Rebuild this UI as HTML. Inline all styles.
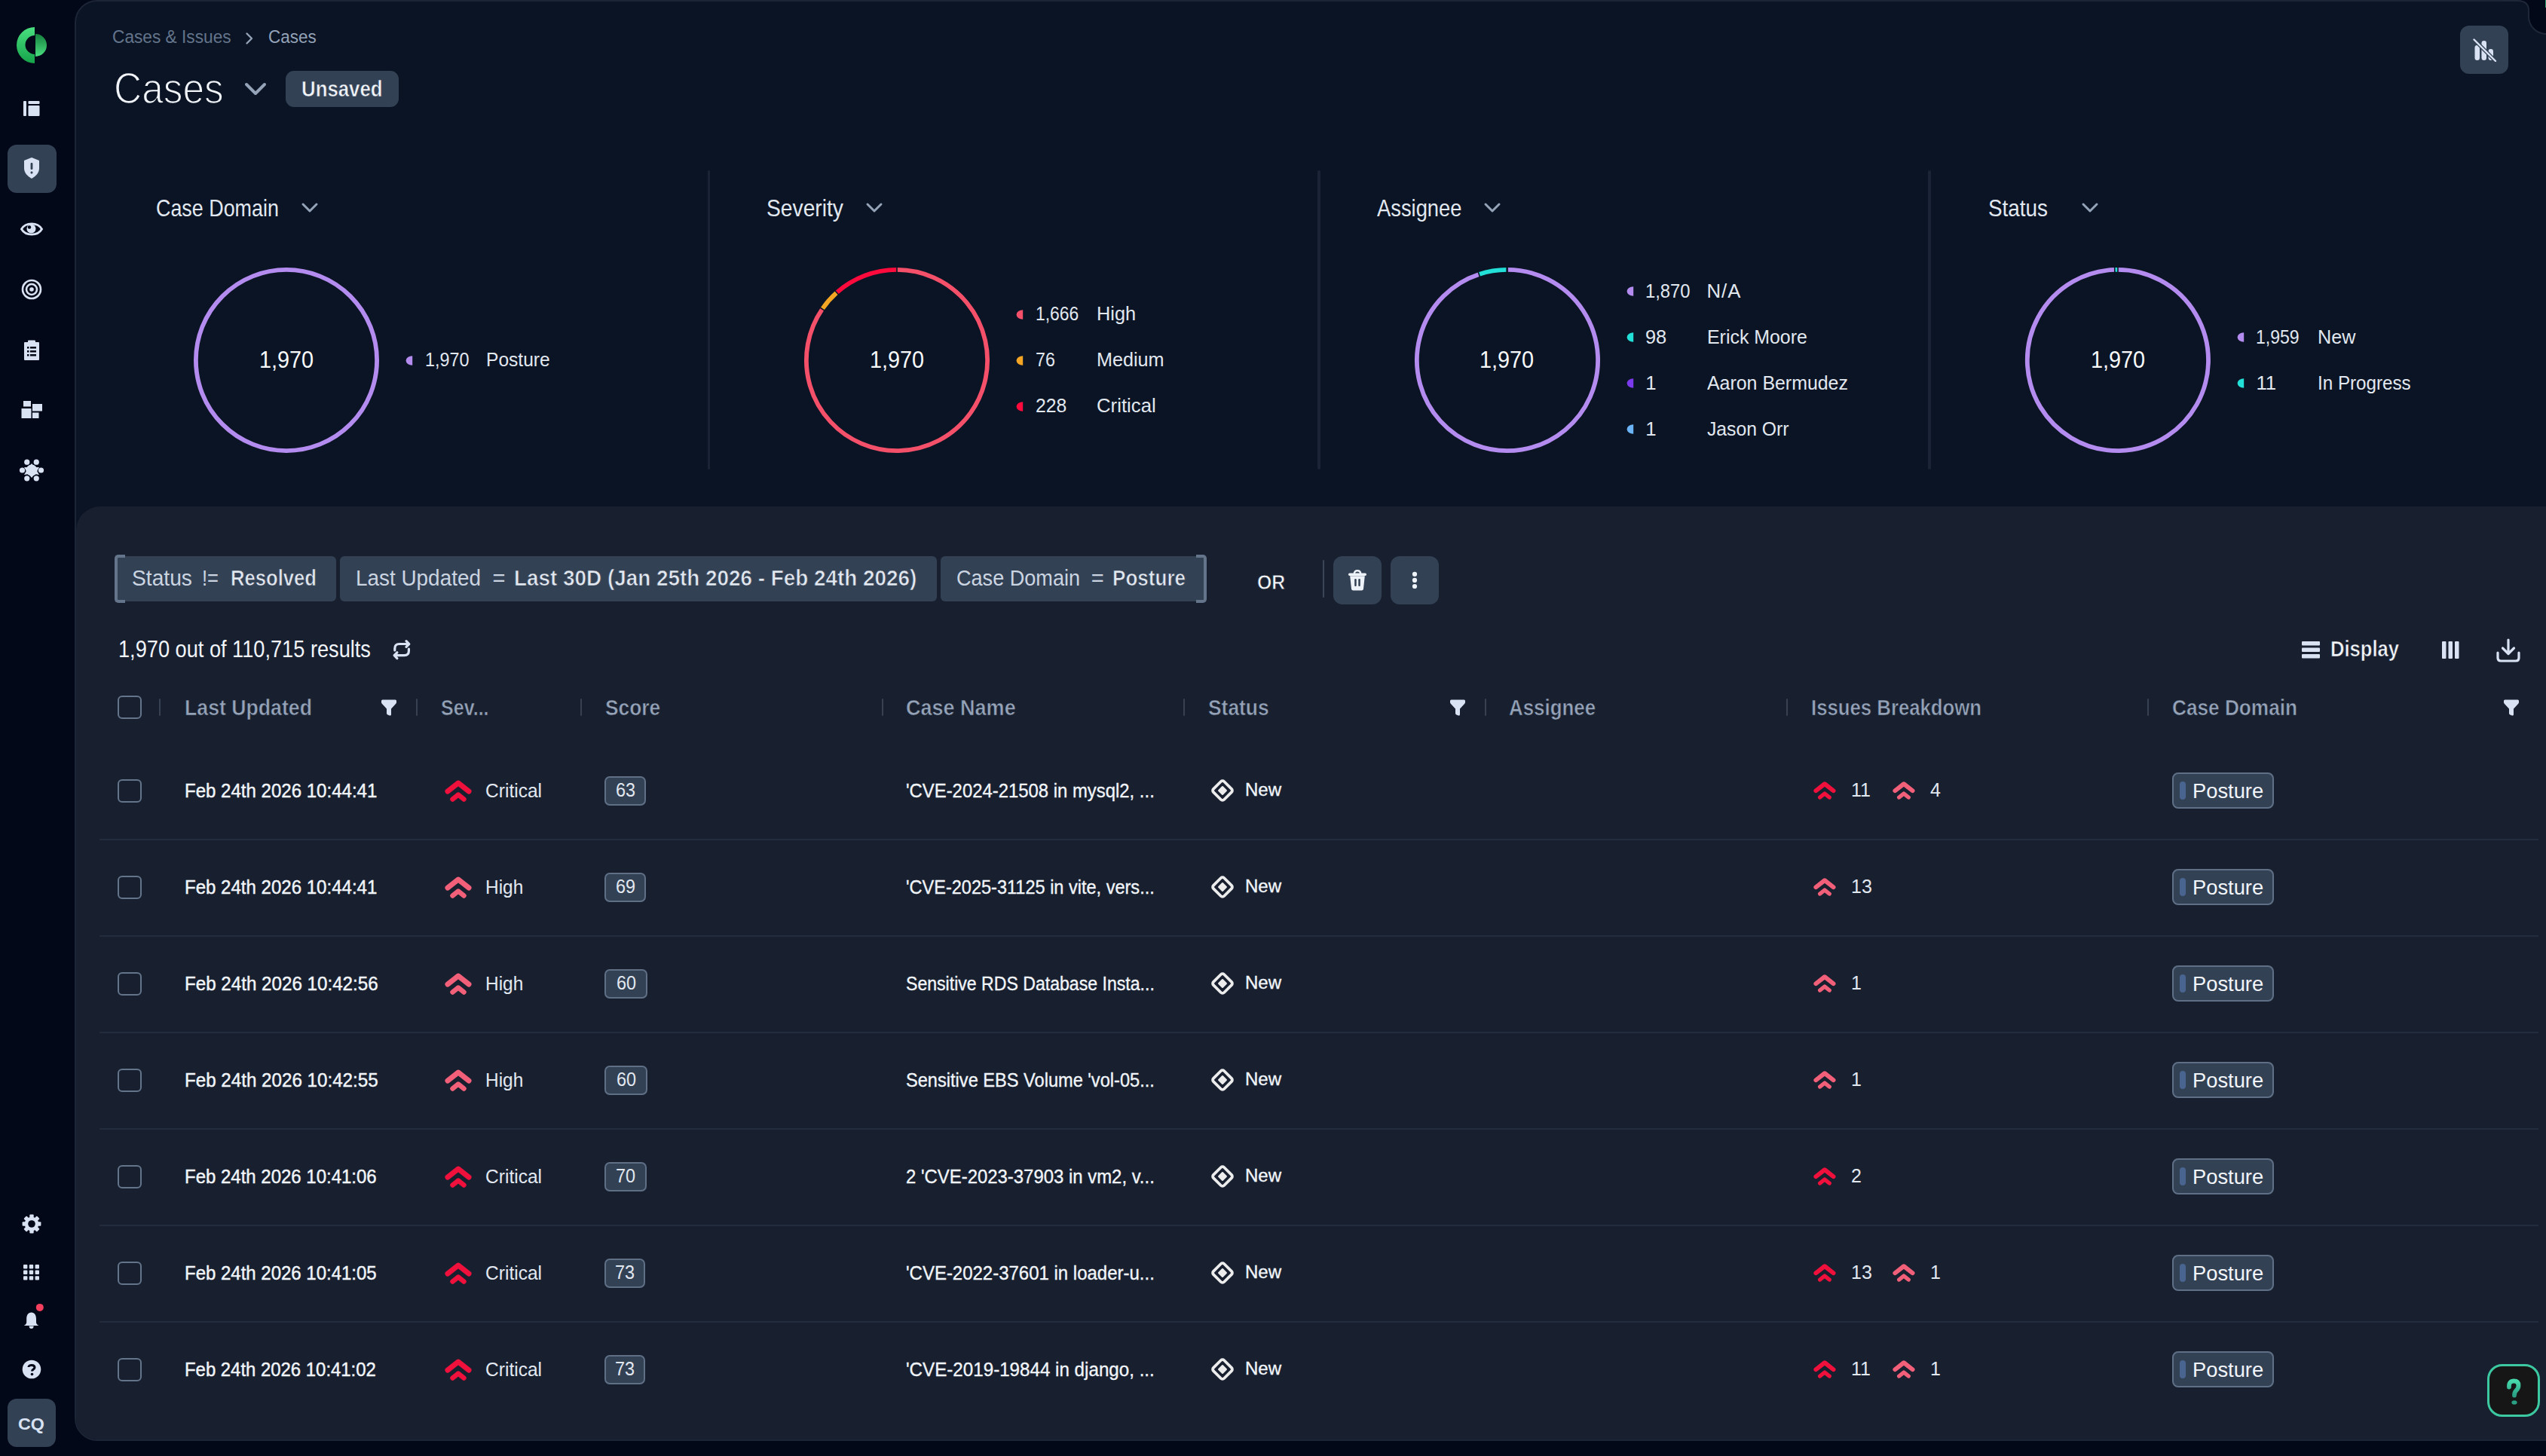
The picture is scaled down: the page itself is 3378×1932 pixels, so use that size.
<!DOCTYPE html><html><head><meta charset="utf-8"><style>
html,body{margin:0;padding:0;width:3378px;height:1932px;overflow:hidden;background:#020817;}
body{position:relative;font-family:"Liberation Sans",sans-serif;}
.t{position:absolute;white-space:pre;line-height:1;}
.r{position:absolute;box-sizing:border-box;}
</style></head><body>
<div class="r" style="left:99px;top:0px;width:3319px;height:1912px;background:#0b1424;border-radius:30px;border:2px solid #1c2536;"></div>
<div class="r" style="left:101px;top:672px;width:3317px;height:1238px;background:#182030;border-radius:32px 0 0 28px;"></div>
<svg class="r" style="left:3320px;top:0px;" width="58" height="60" viewBox="0 0 58 60"><path d="M20 0 Q35 0 35 14 L35 22 A23 23 0 0 0 58 45 L58 0 Z" fill="#020817"/><path d="M0 1 L20 1 Q35 1 35 14 L35 22 A23 23 0 0 0 58 45" fill="none" stroke="#1e2738" stroke-width="2"/></svg>
<div class="r" style="left:3377px;top:0px;width:1px;height:10px;background:#2f9e6e;border-radius:0px;"></div>
<svg class="r" style="left:20px;top:34px;" width="44" height="52" viewBox="0 0 44 52"><defs><linearGradient id="lg1" x1="0" y1="0" x2="0" y2="1"><stop offset="0" stop-color="#4ade80"/><stop offset="1" stop-color="#16a34a"/></linearGradient>
<linearGradient id="lg2" x1="0" y1="0" x2="0" y2="1"><stop offset="0" stop-color="#15803d"/><stop offset="1" stop-color="#4ade80"/></linearGradient></defs>
<path d="M26 2 A24 24 0 0 0 26 50 L26 38 A12 12 0 0 1 26 13 Z" fill="url(#lg1)"/>
<path d="M27 11 A15 15 0 0 1 27 41 Z" fill="url(#lg2)"/></svg>
<svg class="r" style="left:30px;top:133px;" width="24" height="22" viewBox="0 0 24 22"><rect x="1" y="1" width="4" height="20" rx="1" fill="#d8e2f3"/><rect x="7.5" y="1" width="15" height="4" rx="1" fill="#d8e2f3"/><rect x="7.5" y="7" width="15" height="14" rx="1" fill="#d8e2f3"/></svg>
<div class="r" style="left:10px;top:192px;width:65px;height:64px;background:#334155;border-radius:12px;"></div>
<svg class="r" style="left:30px;top:208px;" width="24" height="30" viewBox="0 0 24 30"><path d="M12 1 L22 5 L22 15 C22 22 17 26 12 29 C7 26 2 22 2 15 L2 5 Z" fill="#d8e2f3"/><rect x="10.6" y="8" width="2.8" height="9" rx="1" fill="#334155"/><rect x="10.6" y="19.5" width="2.8" height="3" rx="1" fill="#334155"/></svg>
<svg class="r" style="left:26px;top:293px;" width="32" height="22" viewBox="0 0 32 22"><path d="M2.5 11 C8 1.5 24 1.5 29.5 11 C24 20.5 8 20.5 2.5 11 Z" fill="none" stroke="#d8e2f3" stroke-width="2.8"/><circle cx="15.5" cy="10.5" r="6" fill="#d8e2f3"/><circle cx="13" cy="8.5" r="2.2" fill="#020817"/></svg>
<svg class="r" style="left:28px;top:370px;" width="28" height="28" viewBox="0 0 28 28"><circle cx="14" cy="14" r="12" fill="none" stroke="#d8e2f3" stroke-width="2.6"/><circle cx="14" cy="14" r="7" fill="none" stroke="#d8e2f3" stroke-width="2.6"/><circle cx="14" cy="14" r="2.8" fill="#d8e2f3"/></svg>
<svg class="r" style="left:31px;top:450.5px;" width="22" height="28" viewBox="0 0 22 28"><rect x="1" y="3" width="20" height="24" rx="1" fill="#d8e2f3"/><rect x="6" y="0.5" width="10" height="4" rx="1" fill="#d8e2f3"/><rect x="5" y="9" width="2.5" height="2.5" fill="#020817"/><rect x="9" y="9" width="8" height="2.5" fill="#020817"/><rect x="5" y="14" width="2.5" height="2.5" fill="#020817"/><rect x="9" y="14" width="8" height="2.5" fill="#020817"/><rect x="5" y="19" width="2.5" height="2.5" fill="#020817"/><rect x="9" y="19" width="8" height="2.5" fill="#020817"/></svg>
<svg class="r" style="left:27px;top:532px;" width="30" height="24" viewBox="0 0 30 24"><rect x="4" y="0" width="10" height="7.5" fill="#d8e2f3"/><rect x="16" y="4" width="13" height="9.5" fill="#d8e2f3"/><rect x="1.5" y="10" width="13" height="13" fill="#d8e2f3"/><rect x="16" y="15.5" width="8.5" height="7.5" fill="#d8e2f3"/></svg>
<svg class="r" style="left:25px;top:607px;" width="34" height="34" viewBox="0 0 34 34"><circle cx="17" cy="17" r="7.5" fill="#d8e2f3"/><path d="M17 8 L21 13 L27 13 L24 18 L27 23 L21 22 L17 27 L13 22 L7 23 L10 18 L7 13 L13 13 Z" fill="#d8e2f3"/><circle cx="29.50" cy="17.00" r="3.6" fill="#d8e2f3"/><circle cx="23.25" cy="27.83" r="3.6" fill="#d8e2f3"/><circle cx="10.75" cy="27.83" r="3.6" fill="#d8e2f3"/><circle cx="4.50" cy="17.00" r="3.6" fill="#d8e2f3"/><circle cx="10.75" cy="6.17" r="3.6" fill="#d8e2f3"/><circle cx="23.25" cy="6.17" r="3.6" fill="#d8e2f3"/></svg>
<svg class="r" style="left:29px;top:1611px;" width="26" height="26" viewBox="0 0 26 26"><rect x="10.3" y="0.6" width="5.4" height="6" rx="1" fill="#d8e2f3" transform="rotate(0 13 13)"/><rect x="10.3" y="0.6" width="5.4" height="6" rx="1" fill="#d8e2f3" transform="rotate(45 13 13)"/><rect x="10.3" y="0.6" width="5.4" height="6" rx="1" fill="#d8e2f3" transform="rotate(90 13 13)"/><rect x="10.3" y="0.6" width="5.4" height="6" rx="1" fill="#d8e2f3" transform="rotate(135 13 13)"/><rect x="10.3" y="0.6" width="5.4" height="6" rx="1" fill="#d8e2f3" transform="rotate(180 13 13)"/><rect x="10.3" y="0.6" width="5.4" height="6" rx="1" fill="#d8e2f3" transform="rotate(225 13 13)"/><rect x="10.3" y="0.6" width="5.4" height="6" rx="1" fill="#d8e2f3" transform="rotate(270 13 13)"/><rect x="10.3" y="0.6" width="5.4" height="6" rx="1" fill="#d8e2f3" transform="rotate(315 13 13)"/><circle cx="13" cy="13" r="9.3" fill="#d8e2f3"/><circle cx="13" cy="13" r="4.8" fill="#020817"/></svg>
<svg class="r" style="left:31px;top:1678px;" width="22" height="21" viewBox="0 0 22 21"><rect x="0.0" y="0.0" width="5.4" height="5.4" rx="1" fill="#d8e2f3"/><rect x="7.8" y="0.0" width="5.4" height="5.4" rx="1" fill="#d8e2f3"/><rect x="15.6" y="0.0" width="5.4" height="5.4" rx="1" fill="#d8e2f3"/><rect x="0.0" y="7.6" width="5.4" height="5.4" rx="1" fill="#d8e2f3"/><rect x="7.8" y="7.6" width="5.4" height="5.4" rx="1" fill="#d8e2f3"/><rect x="15.6" y="7.6" width="5.4" height="5.4" rx="1" fill="#d8e2f3"/><rect x="0.0" y="15.2" width="5.4" height="5.4" rx="1" fill="#d8e2f3"/><rect x="7.8" y="15.2" width="5.4" height="5.4" rx="1" fill="#d8e2f3"/><rect x="15.6" y="15.2" width="5.4" height="5.4" rx="1" fill="#d8e2f3"/></svg>
<svg class="r" style="left:30px;top:1728px;" width="32" height="38" viewBox="0 0 32 38"><path d="M11.6 13.5 C7.2 13.5 5.2 17.5 5.2 22 L5.2 26.5 Q5.2 29.3 1.8 31 L21.4 31 Q18 29.3 18 26.5 L18 22 C18 17.5 16 13.5 11.6 13.5 Z" fill="#d8e2f3"/><path d="M8.6 31.5 A3 3.5 0 0 0 14.6 31.5 Z" fill="#d8e2f3"/><circle cx="22.8" cy="6.9" r="5" fill="#f43f5e"/></svg>
<svg class="r" style="left:29px;top:1804px;" width="26" height="26" viewBox="0 0 26 26"><circle cx="13" cy="13" r="12.3" fill="#d8e2f3"/><path d="M9 10 C9 6.5 17 6.5 17 10.5 C17 13 13.5 13 13.5 15.5" fill="none" stroke="#020817" stroke-width="3"/><circle cx="13.5" cy="19.5" r="1.8" fill="#020817"/></svg>
<div class="r" style="left:10px;top:1856px;width:64px;height:64px;background:#334155;border-radius:12px;"></div>
<div class="t" style="left:24.20px;top:1878.54px;font-size:21.80px;letter-spacing:0.000px;color:#d8e2f3;font-weight:bold;transform:scaleX(1.0671);transform-origin:0 0;">CQ</div>
<div class="t" style="left:148.60px;top:37.28px;font-size:24.71px;letter-spacing:0.000px;color:#64748b;transform:scaleX(0.9184);transform-origin:0 0;">Cases &amp; Issues</div>
<svg class="r" style="left:324px;top:42px;" width="14" height="18" viewBox="0 0 14 18"><path d="M3.5 2.5 L10 9 L3.5 15.5" fill="none" stroke="#94a3b8" stroke-width="2.4" stroke-linecap="round" stroke-linejoin="round"/></svg>
<div class="t" style="left:355.60px;top:37.28px;font-size:24.71px;letter-spacing:0.000px;color:#94a3b8;transform:scaleX(0.9093);transform-origin:0 0;">Cases</div>
<div class="t" style="left:150.70px;top:88.27px;font-size:58.14px;letter-spacing:0.000px;color:#f1f5f9;transform:scaleX(0.8852);transform-origin:0 0;-webkit-text-stroke:1.6px #0b1424;">Cases</div>
<svg class="r" style="left:322px;top:106px;" width="34" height="24" viewBox="0 0 34 24"><path d="M5 6 L17 18 L29 6" fill="none" stroke="#94a3b8" stroke-width="4" stroke-linecap="round" stroke-linejoin="round"/></svg>
<div class="r" style="left:379px;top:94px;width:150px;height:48px;background:#334155;border-radius:11px;"></div>
<div class="t" style="left:400.00px;top:103.99px;font-size:29.07px;letter-spacing:0.000px;color:#f1f5f9;font-weight:bold;transform:scaleX(0.8876);transform-origin:0 0;-webkit-text-stroke:0.6px #334155;">Unsaved</div>
<div class="r" style="left:3264px;top:34px;width:64px;height:64px;background:#334155;border-radius:12px;"></div>
<svg class="r" style="left:3280px;top:50px;" width="34" height="32" viewBox="0 0 34 32"><rect x="3.5" y="10" width="6.5" height="20" rx="3.25" fill="#d8e2f3"/><rect x="12.5" y="4" width="6.5" height="26" rx="3.25" fill="#d8e2f3"/><rect x="21.5" y="15" width="6.5" height="15" rx="3.25" fill="#d8e2f3"/><path d="M2.5 2.5 L31 31" stroke="#334155" stroke-width="5"/><path d="M2.5 2.5 L31 31" stroke="#d8e2f3" stroke-width="2.4" stroke-linecap="round"/></svg>
<div class="t" style="left:207.00px;top:260.96px;font-size:30.52px;letter-spacing:0.000px;color:#e2e8f0;transform:scaleX(0.8812);transform-origin:0 0;">Case Domain</div>
<svg class="r" style="left:398px;top:264px;" width="26" height="24" viewBox="0 0 26 24"><path d="M4 7 L13 16 L22 7" fill="none" stroke="#94a3b8" stroke-width="3" stroke-linecap="round" stroke-linejoin="round"/></svg>
<svg class="r" style="left:250px;top:348px;" width="260" height="260" viewBox="0 0 260 260"><circle cx="130" cy="130" r="120.1" fill="none" stroke="#b48cf0" stroke-width="5.8"/></svg>
<div class="t" style="left:343.90px;top:462.16px;font-size:30.52px;letter-spacing:0.000px;color:#f8fafc;transform:scaleX(0.9443);transform-origin:0 0;">1,970</div>
<svg class="r" style="left:538px;top:471.5px;" width="10" height="13" viewBox="0 0 10 13"><path d="M9.2 0.3 A8.6 6.2 0 0 0 9.2 12.7 Z" fill="#b48cf0"/></svg>
<div class="t" style="left:563.80px;top:465.02px;font-size:25.73px;letter-spacing:0.000px;color:#e2e8f0;transform:scaleX(0.9093);transform-origin:0 0;">1,970</div>
<div class="t" style="left:645.00px;top:465.02px;font-size:25.73px;letter-spacing:0.000px;color:#e2e8f0;transform:scaleX(0.9557);transform-origin:0 0;">Posture</div>
<div class="r" style="left:938.5px;top:226px;width:3.5px;height:397px;background:#1a2436;border-radius:2px;"></div>
<div class="t" style="left:1016.60px;top:260.96px;font-size:30.52px;letter-spacing:0.000px;color:#e2e8f0;transform:scaleX(0.9248);transform-origin:0 0;">Severity</div>
<svg class="r" style="left:1146.6px;top:264px;" width="26" height="24" viewBox="0 0 26 24"><path d="M4 7 L13 16 L22 7" fill="none" stroke="#94a3b8" stroke-width="3" stroke-linecap="round" stroke-linejoin="round"/></svg>
<svg class="r" style="left:1060px;top:348px;" width="260" height="260" viewBox="0 0 260 260"><path d="M130.00 9.90 A120.1 120.1 0 1 1 30.96 62.07" fill="none" stroke="#f5506a" stroke-width="5.8"/><path d="M30.96 62.07 A120.1 120.1 0 0 1 50.16 40.28" fill="none" stroke="#f5a524" stroke-width="5.8"/><path d="M50.16 40.28 A120.1 120.1 0 0 1 130.00 9.90" fill="none" stroke="#ff0a3c" stroke-width="5.8"/><path d="M35.08 64.89 L26.84 59.24" stroke="#0b1424" stroke-width="1.6"/><path d="M53.48 44.02 L46.84 36.54" stroke="#0b1424" stroke-width="1.6"/><path d="M130.00 14.90 L130.00 4.90" stroke="#0b1424" stroke-width="1.6"/></svg>
<div class="t" style="left:1153.90px;top:462.16px;font-size:30.52px;letter-spacing:0.000px;color:#f8fafc;transform:scaleX(0.9443);transform-origin:0 0;">1,970</div>
<svg class="r" style="left:1348px;top:410.5px;" width="10" height="13" viewBox="0 0 10 13"><path d="M9.2 0.3 A8.6 6.2 0 0 0 9.2 12.7 Z" fill="#f5506a"/></svg>
<div class="t" style="left:1373.80px;top:404.02px;font-size:25.73px;letter-spacing:0.000px;color:#e2e8f0;transform:scaleX(0.8891);transform-origin:0 0;">1,666</div>
<div class="t" style="left:1455.00px;top:404.02px;font-size:25.73px;letter-spacing:0.000px;color:#e2e8f0;transform:scaleX(0.9836);transform-origin:0 0;">High</div>
<svg class="r" style="left:1348px;top:471.5px;" width="10" height="13" viewBox="0 0 10 13"><path d="M9.2 0.3 A8.6 6.2 0 0 0 9.2 12.7 Z" fill="#f5a524"/></svg>
<div class="t" style="left:1373.80px;top:465.02px;font-size:25.73px;letter-spacing:0.000px;color:#e2e8f0;transform:scaleX(0.9035);transform-origin:0 0;">76</div>
<div class="t" style="left:1455.00px;top:465.02px;font-size:25.73px;letter-spacing:0.000px;color:#e2e8f0;transform:scaleX(0.9786);transform-origin:0 0;">Medium</div>
<svg class="r" style="left:1348px;top:532.5px;" width="10" height="13" viewBox="0 0 10 13"><path d="M9.2 0.3 A8.6 6.2 0 0 0 9.2 12.7 Z" fill="#ff0a3c"/></svg>
<div class="t" style="left:1373.80px;top:526.02px;font-size:25.73px;letter-spacing:0.000px;color:#e2e8f0;transform:scaleX(0.9613);transform-origin:0 0;">228</div>
<div class="t" style="left:1455.00px;top:526.02px;font-size:25.73px;letter-spacing:0.015px;color:#e2e8f0;">Critical</div>
<div class="r" style="left:1748.0px;top:226px;width:3.5px;height:397px;background:#1a2436;border-radius:2px;"></div>
<div class="t" style="left:1826.70px;top:260.96px;font-size:30.52px;letter-spacing:0.000px;color:#e2e8f0;transform:scaleX(0.8957);transform-origin:0 0;">Assignee</div>
<svg class="r" style="left:1967px;top:264px;" width="26" height="24" viewBox="0 0 26 24"><path d="M4 7 L13 16 L22 7" fill="none" stroke="#94a3b8" stroke-width="3" stroke-linecap="round" stroke-linejoin="round"/></svg>
<svg class="r" style="left:1869.5px;top:348px;" width="260" height="260" viewBox="0 0 260 260"><path d="M130.00 9.90 A120.1 120.1 0 1 1 92.34 15.96" fill="none" stroke="#b48cf0" stroke-width="5.8"/><path d="M92.34 15.96 A120.1 120.1 0 0 1 129.23 9.90" fill="none" stroke="#22e0d8" stroke-width="5.8"/><path d="M129.23 9.90 A120.1 120.1 0 0 1 129.62 9.90" fill="none" stroke="#7c3aed" stroke-width="5.8"/><path d="M129.62 9.90 A120.1 120.1 0 0 1 130.00 9.90" fill="none" stroke="#60a5fa" stroke-width="5.8"/><path d="M93.91 20.70 L90.77 11.21" stroke="#0b1424" stroke-width="1.6"/><path d="M129.27 14.90 L129.20 4.90" stroke="#0b1424" stroke-width="1.6"/><path d="M129.63 14.90 L129.60 4.90" stroke="#0b1424" stroke-width="1.6"/><path d="M130.00 14.90 L130.00 4.90" stroke="#0b1424" stroke-width="1.6"/></svg>
<div class="t" style="left:1963.40px;top:462.16px;font-size:30.52px;letter-spacing:0.000px;color:#f8fafc;transform:scaleX(0.9443);transform-origin:0 0;">1,970</div>
<svg class="r" style="left:2157.5px;top:380.0px;" width="10" height="13" viewBox="0 0 10 13"><path d="M9.2 0.3 A8.6 6.2 0 0 0 9.2 12.7 Z" fill="#b48cf0"/></svg>
<div class="t" style="left:2183.30px;top:373.52px;font-size:25.73px;letter-spacing:0.000px;color:#e2e8f0;transform:scaleX(0.9248);transform-origin:0 0;">1,870</div>
<div class="t" style="left:2264.50px;top:373.52px;font-size:25.73px;letter-spacing:0.968px;color:#e2e8f0;">N/A</div>
<svg class="r" style="left:2157.5px;top:441.0px;" width="10" height="13" viewBox="0 0 10 13"><path d="M9.2 0.3 A8.6 6.2 0 0 0 9.2 12.7 Z" fill="#22e0d8"/></svg>
<div class="t" style="left:2183.30px;top:434.52px;font-size:25.73px;letter-spacing:0.000px;color:#e2e8f0;transform:scaleX(0.9875);transform-origin:0 0;">98</div>
<div class="t" style="left:2264.50px;top:434.52px;font-size:25.73px;letter-spacing:0.000px;color:#e2e8f0;transform:scaleX(0.9683);transform-origin:0 0;">Erick Moore</div>
<svg class="r" style="left:2157.5px;top:502.0px;" width="10" height="13" viewBox="0 0 10 13"><path d="M9.2 0.3 A8.6 6.2 0 0 0 9.2 12.7 Z" fill="#7c3aed"/></svg>
<div class="t" style="left:2183.30px;top:495.52px;font-size:25.73px;letter-spacing:0.000px;color:#e2e8f0;">1</div>
<div class="t" style="left:2264.50px;top:495.52px;font-size:25.73px;letter-spacing:0.000px;color:#e2e8f0;transform:scaleX(0.9685);transform-origin:0 0;">Aaron Bermudez</div>
<svg class="r" style="left:2157.5px;top:563.0px;" width="10" height="13" viewBox="0 0 10 13"><path d="M9.2 0.3 A8.6 6.2 0 0 0 9.2 12.7 Z" fill="#6cb4f8"/></svg>
<div class="t" style="left:2183.30px;top:556.52px;font-size:25.73px;letter-spacing:0.000px;color:#e2e8f0;">1</div>
<div class="t" style="left:2264.50px;top:556.52px;font-size:25.73px;letter-spacing:0.000px;color:#e2e8f0;transform:scaleX(0.9607);transform-origin:0 0;">Jason Orr</div>
<div class="r" style="left:2558.1px;top:226px;width:3.5px;height:397px;background:#1a2436;border-radius:2px;"></div>
<div class="t" style="left:2637.60px;top:260.96px;font-size:30.52px;letter-spacing:0.000px;color:#e2e8f0;transform:scaleX(0.9129);transform-origin:0 0;">Status</div>
<svg class="r" style="left:2760px;top:264px;" width="26" height="24" viewBox="0 0 26 24"><path d="M4 7 L13 16 L22 7" fill="none" stroke="#94a3b8" stroke-width="3" stroke-linecap="round" stroke-linejoin="round"/></svg>
<svg class="r" style="left:2679.6px;top:348px;" width="260" height="260" viewBox="0 0 260 260"><path d="M130.00 9.90 A120.1 120.1 0 1 1 125.79 9.97" fill="none" stroke="#b48cf0" stroke-width="5.8"/><path d="M125.79 9.97 A120.1 120.1 0 0 1 130.00 9.90" fill="none" stroke="#22e0d8" stroke-width="5.8"/><path d="M125.96 14.97 L125.61 4.98" stroke="#0b1424" stroke-width="1.6"/><path d="M130.00 14.90 L130.00 4.90" stroke="#0b1424" stroke-width="1.6"/></svg>
<div class="t" style="left:2773.50px;top:462.16px;font-size:30.52px;letter-spacing:0.000px;color:#f8fafc;transform:scaleX(0.9443);transform-origin:0 0;">1,970</div>
<svg class="r" style="left:2967.6px;top:441.0px;" width="10" height="13" viewBox="0 0 10 13"><path d="M9.2 0.3 A8.6 6.2 0 0 0 9.2 12.7 Z" fill="#b48cf0"/></svg>
<div class="t" style="left:2993.40px;top:434.52px;font-size:25.73px;letter-spacing:0.000px;color:#e2e8f0;transform:scaleX(0.8953);transform-origin:0 0;">1,959</div>
<div class="t" style="left:3074.60px;top:434.52px;font-size:25.73px;letter-spacing:0.000px;color:#e2e8f0;transform:scaleX(0.9790);transform-origin:0 0;">New</div>
<svg class="r" style="left:2967.6px;top:502.0px;" width="10" height="13" viewBox="0 0 10 13"><path d="M9.2 0.3 A8.6 6.2 0 0 0 9.2 12.7 Z" fill="#22e0d8"/></svg>
<div class="t" style="left:2993.40px;top:495.52px;font-size:25.73px;letter-spacing:0.000px;color:#e2e8f0;">11</div>
<div class="t" style="left:3074.60px;top:495.52px;font-size:25.73px;letter-spacing:0.000px;color:#e2e8f0;transform:scaleX(0.9400);transform-origin:0 0;">In Progress</div>
<div class="r" style="left:152px;top:738px;width:294px;height:60px;background:#334155;border-radius:6px;"></div>
<div class="r" style="left:451px;top:738px;width:792px;height:60px;background:#334155;border-radius:6px;"></div>
<div class="r" style="left:1248px;top:738px;width:351px;height:60px;background:#334155;border-radius:6px;"></div>
<div class="r" style="left:152px;top:736px;width:14px;height:64px;border:4px solid #64748b;border-right:none;border-radius:5px 0 0 5px;"></div>
<div class="r" style="left:1587px;top:736px;width:14px;height:64px;border:4px solid #64748b;border-left:none;border-radius:0 5px 5px 0;"></div>
<div class="t" style="left:175.00px;top:752.79px;font-size:29.07px;letter-spacing:0.000px;color:#cbd5e1;transform:scaleX(0.9707);transform-origin:0 0;">Status</div>
<div class="t" style="left:268.00px;top:752.79px;font-size:29.07px;letter-spacing:0.000px;color:#cbd5e1;transform:scaleX(0.8800);transform-origin:0 0;">!=</div>
<div class="t" style="left:306.00px;top:752.79px;font-size:29.07px;letter-spacing:0.000px;color:#e2e8f0;font-weight:bold;transform:scaleX(0.8822);transform-origin:0 0;-webkit-text-stroke:0.7px #334155;">Resolved</div>
<div class="t" style="left:472.20px;top:752.79px;font-size:29.07px;letter-spacing:0.000px;color:#cbd5e1;transform:scaleX(0.9597);transform-origin:0 0;">Last Updated</div>
<div class="t" style="left:653.60px;top:752.79px;font-size:29.07px;letter-spacing:0.000px;color:#cbd5e1;">=</div>
<div class="t" style="left:682.20px;top:752.79px;font-size:29.07px;letter-spacing:0.000px;color:#e2e8f0;font-weight:bold;transform:scaleX(0.9589);transform-origin:0 0;-webkit-text-stroke:0.7px #334155;">Last 30D (Jan 25th 2026 - Feb 24th 2026)</div>
<div class="t" style="left:1268.70px;top:752.79px;font-size:29.07px;letter-spacing:0.000px;color:#cbd5e1;transform:scaleX(0.9315);transform-origin:0 0;">Case Domain</div>
<div class="t" style="left:1447.80px;top:752.79px;font-size:29.07px;letter-spacing:0.000px;color:#cbd5e1;">=</div>
<div class="t" style="left:1475.70px;top:752.79px;font-size:29.07px;letter-spacing:0.000px;color:#e2e8f0;font-weight:bold;transform:scaleX(0.8967);transform-origin:0 0;-webkit-text-stroke:0.7px #334155;">Posture</div>
<div class="t" style="left:1667.90px;top:759.39px;font-size:27.18px;letter-spacing:0.000px;color:#f1f5f9;font-weight:bold;transform:scaleX(0.9149);transform-origin:0 0;-webkit-text-stroke:0.8px #182030;">OR</div>
<div class="r" style="left:1755px;top:743px;width:2px;height:50px;background:#3a4556;border-radius:1px;"></div>
<div class="r" style="left:1769px;top:738px;width:64px;height:64px;background:#334155;border-radius:12px;"></div>
<svg class="r" style="left:1787px;top:754px;" width="28" height="32" viewBox="0 0 28 32"><path d="M9.8 7.5 Q9.8 3.2 14 3.2 Q18.2 3.2 18.2 7.5" fill="none" stroke="#eef2f9" stroke-width="2.4"/><rect x="2" y="6.6" width="24" height="3.3" rx="1.6" fill="#eef2f9"/><path d="M4.2 10.3 L23.8 10.3 L22 27.3 Q21.7 29.5 19.6 29.5 L8.4 29.5 Q6.3 29.5 6 27.3 Z" fill="#eef2f9"/><rect x="10.2" y="14" width="2.5" height="10" rx="1.2" fill="#334155"/><rect x="15.3" y="14" width="2.5" height="10" rx="1.2" fill="#334155"/></svg>
<div class="r" style="left:1845px;top:738px;width:64px;height:64px;background:#334155;border-radius:12px;"></div>
<svg class="r" style="left:1872px;top:757px;" width="10" height="26" viewBox="0 0 10 26"><circle cx="5" cy="4.8" r="3.1" fill="#eef2f9"/><circle cx="5" cy="12.9" r="3.1" fill="#eef2f9"/><circle cx="5" cy="21.0" r="3.1" fill="#eef2f9"/></svg>
<div class="t" style="left:156.50px;top:846.26px;font-size:30.52px;letter-spacing:0.000px;color:#f1f5f9;transform:scaleX(0.8907);transform-origin:0 0;">1,970 out of 110,715 results</div>
<svg class="r" style="left:518px;top:846px;" width="30" height="30" viewBox="0 0 30 30"><path d="M5.8 16.9 V14.5 Q5.8 8.5 11.8 8.5 H24" fill="none" stroke="#d8e2f3" stroke-width="3.2" stroke-linecap="round"/><path d="M21 4.6 L24.8 8.5 L21 12.3" fill="none" stroke="#d8e2f3" stroke-width="3.2" stroke-linecap="round" stroke-linejoin="round"/><path d="M24.4 15 V17.7 Q24.4 23.7 18.4 23.7 H6" fill="none" stroke="#d8e2f3" stroke-width="3.2" stroke-linecap="round"/><path d="M8.9 19.8 L5.1 23.7 L8.9 27.6" fill="none" stroke="#d8e2f3" stroke-width="3.2" stroke-linecap="round" stroke-linejoin="round"/></svg>
<svg class="r" style="left:3053px;top:850px;" width="28" height="26" viewBox="0 0 28 26"><rect x="1" y="1.0" width="24" height="5.5" rx="1" fill="#d8e2f3"/><rect x="1" y="9.5" width="24" height="5.5" rx="1" fill="#d8e2f3"/><rect x="1" y="18.0" width="24" height="5.5" rx="1" fill="#d8e2f3"/></svg>
<div class="t" style="left:3092.00px;top:845.77px;font-size:29.80px;letter-spacing:0.000px;color:#f1f5f9;font-weight:bold;transform:scaleX(0.8591);transform-origin:0 0;-webkit-text-stroke:0.6px #182030;">Display</div>
<svg class="r" style="left:3239px;top:850px;" width="26" height="26" viewBox="0 0 26 26"><rect x="1.0" y="1" width="5.5" height="23" rx="1" fill="#d8e2f3"/><rect x="9.5" y="1" width="5.5" height="23" rx="1" fill="#d8e2f3"/><rect x="18.0" y="1" width="5.5" height="23" rx="1" fill="#d8e2f3"/></svg>
<svg class="r" style="left:3310px;top:846px;" width="36" height="34" viewBox="0 0 36 34"><path d="M18 3 L18 21 M10.5 14 L18 21.5 L25.5 14" fill="none" stroke="#d8e2f3" stroke-width="3.2" stroke-linecap="round" stroke-linejoin="round"/><path d="M4 20 L4 27 Q4 31 8 31 L28 31 Q32 31 32 27 L32 20" fill="none" stroke="#d8e2f3" stroke-width="3.2" stroke-linecap="round"/></svg>
<div class="r" style="left:156px;top:923.0px;width:32px;height:31px;border:2.5px solid #64748b;border-radius:6px;"></div>
<div class="r" style="left:211px;top:927px;width:2px;height:23px;background:#374151;border-radius:1px;"></div>
<div class="r" style="left:552px;top:927px;width:2px;height:23px;background:#374151;border-radius:1px;"></div>
<div class="r" style="left:769.6px;top:927px;width:2.0px;height:23px;background:#374151;border-radius:1px;"></div>
<div class="r" style="left:1169.5px;top:927px;width:2.0px;height:23px;background:#374151;border-radius:1px;"></div>
<div class="r" style="left:1570px;top:927px;width:2px;height:23px;background:#374151;border-radius:1px;"></div>
<div class="r" style="left:1970px;top:927px;width:2px;height:23px;background:#374151;border-radius:1px;"></div>
<div class="r" style="left:2369.6px;top:927px;width:2.0px;height:23px;background:#374151;border-radius:1px;"></div>
<div class="r" style="left:2849px;top:927px;width:2px;height:23px;background:#374151;border-radius:1px;"></div>
<div class="t" style="left:244.90px;top:923.87px;font-size:29.80px;letter-spacing:0.000px;color:#94a3b8;font-weight:bold;transform:scaleX(0.8953);transform-origin:0 0;-webkit-text-stroke:0.6px #182030;">Last Updated</div>
<div class="t" style="left:585.00px;top:923.87px;font-size:29.80px;letter-spacing:0.000px;color:#94a3b8;font-weight:bold;transform:scaleX(0.8403);transform-origin:0 0;-webkit-text-stroke:0.6px #182030;">Sev...</div>
<div class="t" style="left:802.70px;top:923.87px;font-size:29.80px;letter-spacing:0.000px;color:#94a3b8;font-weight:bold;transform:scaleX(0.8837);transform-origin:0 0;-webkit-text-stroke:0.6px #182030;">Score</div>
<div class="t" style="left:1202.20px;top:923.87px;font-size:29.80px;letter-spacing:0.000px;color:#94a3b8;font-weight:bold;transform:scaleX(0.9066);transform-origin:0 0;-webkit-text-stroke:0.6px #182030;">Case Name</div>
<div class="t" style="left:1603.40px;top:923.87px;font-size:29.80px;letter-spacing:0.000px;color:#94a3b8;font-weight:bold;transform:scaleX(0.8854);transform-origin:0 0;-webkit-text-stroke:0.6px #182030;">Status</div>
<div class="t" style="left:2002.00px;top:923.87px;font-size:29.80px;letter-spacing:0.000px;color:#94a3b8;font-weight:bold;transform:scaleX(0.8683);transform-origin:0 0;-webkit-text-stroke:0.6px #182030;">Assignee</div>
<div class="t" style="left:2402.60px;top:923.87px;font-size:29.80px;letter-spacing:0.000px;color:#94a3b8;font-weight:bold;transform:scaleX(0.8639);transform-origin:0 0;-webkit-text-stroke:0.6px #182030;">Issues Breakdown</div>
<div class="t" style="left:2882.00px;top:923.87px;font-size:29.80px;letter-spacing:0.000px;color:#94a3b8;font-weight:bold;transform:scaleX(0.8794);transform-origin:0 0;-webkit-text-stroke:0.6px #182030;">Case Domain</div>
<svg class="r" style="left:504px;top:927px;" width="24" height="24" viewBox="0 0 24 24"><path d="M2 3 Q2 1.5 3.5 1.5 L20.5 1.5 Q22 1.5 22 3 L22 5 Q22 6 21 7 L15 13.5 L15 21 Q15 23 13 22.5 L10.5 21.5 Q9 21 9 19.5 L9 13.5 L3 7 Q2 6 2 5 Z" fill="#d8e2f3"/></svg>
<svg class="r" style="left:1922px;top:927px;" width="24" height="24" viewBox="0 0 24 24"><path d="M2 3 Q2 1.5 3.5 1.5 L20.5 1.5 Q22 1.5 22 3 L22 5 Q22 6 21 7 L15 13.5 L15 21 Q15 23 13 22.5 L10.5 21.5 Q9 21 9 19.5 L9 13.5 L3 7 Q2 6 2 5 Z" fill="#d8e2f3"/></svg>
<svg class="r" style="left:3320px;top:927px;" width="24" height="24" viewBox="0 0 24 24"><path d="M2 3 Q2 1.5 3.5 1.5 L20.5 1.5 Q22 1.5 22 3 L22 5 Q22 6 21 7 L15 13.5 L15 21 Q15 23 13 22.5 L10.5 21.5 Q9 21 9 19.5 L9 13.5 L3 7 Q2 6 2 5 Z" fill="#d8e2f3"/></svg>
<div class="r" style="left:156px;top:1033.5px;width:32px;height:31px;border:2.5px solid #64748b;border-radius:6px;"></div>
<div class="t" style="left:244.50px;top:1035.60px;font-size:26.45px;letter-spacing:0.000px;color:#f1f5f9;transform:scaleX(0.9094);transform-origin:0 0;-webkit-text-stroke:0.45px #f1f5f9;">Feb 24th 2026 10:44:41</div>
<svg class="r" style="left:590px;top:1034px;" width="36" height="30" viewBox="0 0 36 30"><path d="M4 16 L18 5 L32 16" fill="none" stroke="#f0103c" stroke-width="7" stroke-linecap="round" stroke-linejoin="round"/><path d="M10.5 26.5 L18 20.5 L25.5 26.5" fill="none" stroke="#f0103c" stroke-width="6.5" stroke-linecap="round" stroke-linejoin="round"/></svg>
<div class="t" style="left:644.40px;top:1035.60px;font-size:26.45px;letter-spacing:0.000px;color:#e2e8f0;transform:scaleX(0.9293);transform-origin:0 0;">Critical</div>
<div class="r" style="left:802px;top:1029.5px;width:55px;height:39.5px;background:#334155;border-radius:7px;border:2px solid #5f6f86;"></div>
<div class="t" style="left:816.51px;top:1036.46px;font-size:25.44px;letter-spacing:0.000px;color:#e2e8f0;transform:scaleX(0.9200);transform-origin:0 0;">63</div>
<div class="t" style="left:1202.00px;top:1035.60px;font-size:26.45px;letter-spacing:0.000px;color:#f1f5f9;transform:scaleX(0.9033);transform-origin:0 0;-webkit-text-stroke:0.35px #f1f5f9;">&#x27;CVE-2024-21508 in mysql2, ...</div>
<svg class="r" style="left:1605px;top:1033px;" width="34" height="32" viewBox="0 0 34 32"><rect x="7" y="6" width="20" height="20" rx="3" transform="rotate(45 17 16)" fill="none" stroke="#ececec" stroke-width="3.8"/><rect x="12.5" y="11.5" width="9" height="9" rx="1" transform="rotate(45 17 16)" fill="#ececec"/></svg>
<div class="t" style="left:1651.80px;top:1036.08px;font-size:24.71px;letter-spacing:0.000px;color:#f1f5f9;transform:scaleX(0.9729);transform-origin:0 0;-webkit-text-stroke:0.35px #f1f5f9;">New</div>
<svg class="r" style="left:2406px;top:1036px;" width="30" height="26" viewBox="0 0 30 26"><g transform="scale(0.83)"><path d="M4 16 L18 5 L32 16" fill="none" stroke="#f0103c" stroke-width="7" stroke-linecap="round" stroke-linejoin="round"/><path d="M10.5 26.5 L18 20.5 L25.5 26.5" fill="none" stroke="#f0103c" stroke-width="6.5" stroke-linecap="round" stroke-linejoin="round"/></g></svg>
<div class="t" style="left:2456.00px;top:1036.43px;font-size:25.00px;letter-spacing:0.000px;color:#e2e8f0;">11</div>
<svg class="r" style="left:2511px;top:1036px;" width="30" height="26" viewBox="0 0 30 26"><g transform="scale(0.83)"><path d="M4 16 L18 5 L32 16" fill="none" stroke="#f25f79" stroke-width="7" stroke-linecap="round" stroke-linejoin="round"/><path d="M10.5 26.5 L18 20.5 L25.5 26.5" fill="none" stroke="#f25f79" stroke-width="6.5" stroke-linecap="round" stroke-linejoin="round"/></g></svg>
<div class="t" style="left:2561.00px;top:1036.43px;font-size:25.00px;letter-spacing:0.000px;color:#e2e8f0;">4</div>
<div class="r" style="left:2882px;top:1025px;width:135.4000000000001px;height:47.5px;background:#334155;border-radius:8px;border:2px solid #5f6f86;"></div>
<div class="r" style="left:2892px;top:1037px;width:8px;height:24px;background:#4a6490;border-radius:4px;"></div>
<div class="t" style="left:2909.20px;top:1035.62px;font-size:27.62px;letter-spacing:0.000px;color:#f1f5f9;transform:scaleX(0.9891);transform-origin:0 0;">Posture</div>
<div class="r" style="left:132px;top:1112.5px;width:3236px;height:2.0px;background:#232c3d;border-radius:0px;"></div>
<div class="r" style="left:156px;top:1161.5px;width:32px;height:31px;border:2.5px solid #64748b;border-radius:6px;"></div>
<div class="t" style="left:244.50px;top:1163.60px;font-size:26.45px;letter-spacing:0.000px;color:#f1f5f9;transform:scaleX(0.9094);transform-origin:0 0;-webkit-text-stroke:0.45px #f1f5f9;">Feb 24th 2026 10:44:41</div>
<svg class="r" style="left:590px;top:1162px;" width="36" height="30" viewBox="0 0 36 30"><path d="M4 16 L18 5 L32 16" fill="none" stroke="#f25f79" stroke-width="7" stroke-linecap="round" stroke-linejoin="round"/><path d="M10.5 26.5 L18 20.5 L25.5 26.5" fill="none" stroke="#f25f79" stroke-width="6.5" stroke-linecap="round" stroke-linejoin="round"/></svg>
<div class="t" style="left:644.40px;top:1163.60px;font-size:26.45px;letter-spacing:0.000px;color:#e2e8f0;transform:scaleX(0.9234);transform-origin:0 0;">High</div>
<div class="r" style="left:802px;top:1157.5px;width:55px;height:39.5px;background:#334155;border-radius:7px;border:2px solid #5f6f86;"></div>
<div class="t" style="left:816.51px;top:1164.46px;font-size:25.44px;letter-spacing:0.000px;color:#e2e8f0;transform:scaleX(0.9200);transform-origin:0 0;">69</div>
<div class="t" style="left:1202.00px;top:1163.60px;font-size:26.45px;letter-spacing:0.000px;color:#f1f5f9;transform:scaleX(0.8901);transform-origin:0 0;-webkit-text-stroke:0.35px #f1f5f9;">&#x27;CVE-2025-31125 in vite, vers...</div>
<svg class="r" style="left:1605px;top:1161px;" width="34" height="32" viewBox="0 0 34 32"><rect x="7" y="6" width="20" height="20" rx="3" transform="rotate(45 17 16)" fill="none" stroke="#ececec" stroke-width="3.8"/><rect x="12.5" y="11.5" width="9" height="9" rx="1" transform="rotate(45 17 16)" fill="#ececec"/></svg>
<div class="t" style="left:1651.80px;top:1164.08px;font-size:24.71px;letter-spacing:0.000px;color:#f1f5f9;transform:scaleX(0.9729);transform-origin:0 0;-webkit-text-stroke:0.35px #f1f5f9;">New</div>
<svg class="r" style="left:2406px;top:1164px;" width="30" height="26" viewBox="0 0 30 26"><g transform="scale(0.83)"><path d="M4 16 L18 5 L32 16" fill="none" stroke="#f25f79" stroke-width="7" stroke-linecap="round" stroke-linejoin="round"/><path d="M10.5 26.5 L18 20.5 L25.5 26.5" fill="none" stroke="#f25f79" stroke-width="6.5" stroke-linecap="round" stroke-linejoin="round"/></g></svg>
<div class="t" style="left:2456.00px;top:1164.43px;font-size:25.00px;letter-spacing:0.000px;color:#e2e8f0;">13</div>
<div class="r" style="left:2882px;top:1153px;width:135.4000000000001px;height:47.5px;background:#334155;border-radius:8px;border:2px solid #5f6f86;"></div>
<div class="r" style="left:2892px;top:1165px;width:8px;height:24px;background:#4a6490;border-radius:4px;"></div>
<div class="t" style="left:2909.20px;top:1163.62px;font-size:27.62px;letter-spacing:0.000px;color:#f1f5f9;transform:scaleX(0.9891);transform-origin:0 0;">Posture</div>
<div class="r" style="left:132px;top:1240.5px;width:3236px;height:2.0px;background:#232c3d;border-radius:0px;"></div>
<div class="r" style="left:156px;top:1289.5px;width:32px;height:31px;border:2.5px solid #64748b;border-radius:6px;"></div>
<div class="t" style="left:244.50px;top:1291.60px;font-size:26.45px;letter-spacing:0.000px;color:#f1f5f9;transform:scaleX(0.9141);transform-origin:0 0;-webkit-text-stroke:0.45px #f1f5f9;">Feb 24th 2026 10:42:56</div>
<svg class="r" style="left:590px;top:1290px;" width="36" height="30" viewBox="0 0 36 30"><path d="M4 16 L18 5 L32 16" fill="none" stroke="#f25f79" stroke-width="7" stroke-linecap="round" stroke-linejoin="round"/><path d="M10.5 26.5 L18 20.5 L25.5 26.5" fill="none" stroke="#f25f79" stroke-width="6.5" stroke-linecap="round" stroke-linejoin="round"/></svg>
<div class="t" style="left:644.40px;top:1291.60px;font-size:26.45px;letter-spacing:0.000px;color:#e2e8f0;transform:scaleX(0.9234);transform-origin:0 0;">High</div>
<div class="r" style="left:802px;top:1285.5px;width:57px;height:39.5px;background:#334155;border-radius:7px;border:2px solid #5f6f86;"></div>
<div class="t" style="left:817.51px;top:1292.46px;font-size:25.44px;letter-spacing:0.000px;color:#e2e8f0;transform:scaleX(0.9200);transform-origin:0 0;">60</div>
<div class="t" style="left:1202.00px;top:1291.60px;font-size:26.45px;letter-spacing:0.000px;color:#f1f5f9;transform:scaleX(0.8733);transform-origin:0 0;-webkit-text-stroke:0.35px #f1f5f9;">Sensitive RDS Database Insta...</div>
<svg class="r" style="left:1605px;top:1289px;" width="34" height="32" viewBox="0 0 34 32"><rect x="7" y="6" width="20" height="20" rx="3" transform="rotate(45 17 16)" fill="none" stroke="#ececec" stroke-width="3.8"/><rect x="12.5" y="11.5" width="9" height="9" rx="1" transform="rotate(45 17 16)" fill="#ececec"/></svg>
<div class="t" style="left:1651.80px;top:1292.08px;font-size:24.71px;letter-spacing:0.000px;color:#f1f5f9;transform:scaleX(0.9729);transform-origin:0 0;-webkit-text-stroke:0.35px #f1f5f9;">New</div>
<svg class="r" style="left:2406px;top:1292px;" width="30" height="26" viewBox="0 0 30 26"><g transform="scale(0.83)"><path d="M4 16 L18 5 L32 16" fill="none" stroke="#f25f79" stroke-width="7" stroke-linecap="round" stroke-linejoin="round"/><path d="M10.5 26.5 L18 20.5 L25.5 26.5" fill="none" stroke="#f25f79" stroke-width="6.5" stroke-linecap="round" stroke-linejoin="round"/></g></svg>
<div class="t" style="left:2456.00px;top:1292.43px;font-size:25.00px;letter-spacing:0.000px;color:#e2e8f0;">1</div>
<div class="r" style="left:2882px;top:1281px;width:135.4000000000001px;height:47.5px;background:#334155;border-radius:8px;border:2px solid #5f6f86;"></div>
<div class="r" style="left:2892px;top:1293px;width:8px;height:24px;background:#4a6490;border-radius:4px;"></div>
<div class="t" style="left:2909.20px;top:1291.62px;font-size:27.62px;letter-spacing:0.000px;color:#f1f5f9;transform:scaleX(0.9891);transform-origin:0 0;">Posture</div>
<div class="r" style="left:132px;top:1368.5px;width:3236px;height:2.0px;background:#232c3d;border-radius:0px;"></div>
<div class="r" style="left:156px;top:1417.5px;width:32px;height:31px;border:2.5px solid #64748b;border-radius:6px;"></div>
<div class="t" style="left:244.50px;top:1419.60px;font-size:26.45px;letter-spacing:0.000px;color:#f1f5f9;transform:scaleX(0.9141);transform-origin:0 0;-webkit-text-stroke:0.45px #f1f5f9;">Feb 24th 2026 10:42:55</div>
<svg class="r" style="left:590px;top:1418px;" width="36" height="30" viewBox="0 0 36 30"><path d="M4 16 L18 5 L32 16" fill="none" stroke="#f25f79" stroke-width="7" stroke-linecap="round" stroke-linejoin="round"/><path d="M10.5 26.5 L18 20.5 L25.5 26.5" fill="none" stroke="#f25f79" stroke-width="6.5" stroke-linecap="round" stroke-linejoin="round"/></svg>
<div class="t" style="left:644.40px;top:1419.60px;font-size:26.45px;letter-spacing:0.000px;color:#e2e8f0;transform:scaleX(0.9234);transform-origin:0 0;">High</div>
<div class="r" style="left:802px;top:1413.5px;width:57px;height:39.5px;background:#334155;border-radius:7px;border:2px solid #5f6f86;"></div>
<div class="t" style="left:817.51px;top:1420.46px;font-size:25.44px;letter-spacing:0.000px;color:#e2e8f0;transform:scaleX(0.9200);transform-origin:0 0;">60</div>
<div class="t" style="left:1202.00px;top:1419.60px;font-size:26.45px;letter-spacing:0.000px;color:#f1f5f9;transform:scaleX(0.8926);transform-origin:0 0;-webkit-text-stroke:0.35px #f1f5f9;">Sensitive EBS Volume &#x27;vol-05...</div>
<svg class="r" style="left:1605px;top:1417px;" width="34" height="32" viewBox="0 0 34 32"><rect x="7" y="6" width="20" height="20" rx="3" transform="rotate(45 17 16)" fill="none" stroke="#ececec" stroke-width="3.8"/><rect x="12.5" y="11.5" width="9" height="9" rx="1" transform="rotate(45 17 16)" fill="#ececec"/></svg>
<div class="t" style="left:1651.80px;top:1420.08px;font-size:24.71px;letter-spacing:0.000px;color:#f1f5f9;transform:scaleX(0.9729);transform-origin:0 0;-webkit-text-stroke:0.35px #f1f5f9;">New</div>
<svg class="r" style="left:2406px;top:1420px;" width="30" height="26" viewBox="0 0 30 26"><g transform="scale(0.83)"><path d="M4 16 L18 5 L32 16" fill="none" stroke="#f25f79" stroke-width="7" stroke-linecap="round" stroke-linejoin="round"/><path d="M10.5 26.5 L18 20.5 L25.5 26.5" fill="none" stroke="#f25f79" stroke-width="6.5" stroke-linecap="round" stroke-linejoin="round"/></g></svg>
<div class="t" style="left:2456.00px;top:1420.43px;font-size:25.00px;letter-spacing:0.000px;color:#e2e8f0;">1</div>
<div class="r" style="left:2882px;top:1409px;width:135.4000000000001px;height:47.5px;background:#334155;border-radius:8px;border:2px solid #5f6f86;"></div>
<div class="r" style="left:2892px;top:1421px;width:8px;height:24px;background:#4a6490;border-radius:4px;"></div>
<div class="t" style="left:2909.20px;top:1419.62px;font-size:27.62px;letter-spacing:0.000px;color:#f1f5f9;transform:scaleX(0.9891);transform-origin:0 0;">Posture</div>
<div class="r" style="left:132px;top:1496.5px;width:3236px;height:2.0px;background:#232c3d;border-radius:0px;"></div>
<div class="r" style="left:156px;top:1545.5px;width:32px;height:31px;border:2.5px solid #64748b;border-radius:6px;"></div>
<div class="t" style="left:244.50px;top:1547.60px;font-size:26.45px;letter-spacing:0.000px;color:#f1f5f9;transform:scaleX(0.9070);transform-origin:0 0;-webkit-text-stroke:0.45px #f1f5f9;">Feb 24th 2026 10:41:06</div>
<svg class="r" style="left:590px;top:1546px;" width="36" height="30" viewBox="0 0 36 30"><path d="M4 16 L18 5 L32 16" fill="none" stroke="#f0103c" stroke-width="7" stroke-linecap="round" stroke-linejoin="round"/><path d="M10.5 26.5 L18 20.5 L25.5 26.5" fill="none" stroke="#f0103c" stroke-width="6.5" stroke-linecap="round" stroke-linejoin="round"/></svg>
<div class="t" style="left:644.40px;top:1547.60px;font-size:26.45px;letter-spacing:0.000px;color:#e2e8f0;transform:scaleX(0.9293);transform-origin:0 0;">Critical</div>
<div class="r" style="left:802px;top:1541.5px;width:56px;height:39.5px;background:#334155;border-radius:7px;border:2px solid #5f6f86;"></div>
<div class="t" style="left:817.01px;top:1548.46px;font-size:25.44px;letter-spacing:0.000px;color:#e2e8f0;transform:scaleX(0.9200);transform-origin:0 0;">70</div>
<div class="t" style="left:1202.00px;top:1547.60px;font-size:26.45px;letter-spacing:0.000px;color:#f1f5f9;transform:scaleX(0.9046);transform-origin:0 0;-webkit-text-stroke:0.35px #f1f5f9;">2 &#x27;CVE-2023-37903 in vm2, v...</div>
<svg class="r" style="left:1605px;top:1545px;" width="34" height="32" viewBox="0 0 34 32"><rect x="7" y="6" width="20" height="20" rx="3" transform="rotate(45 17 16)" fill="none" stroke="#ececec" stroke-width="3.8"/><rect x="12.5" y="11.5" width="9" height="9" rx="1" transform="rotate(45 17 16)" fill="#ececec"/></svg>
<div class="t" style="left:1651.80px;top:1548.08px;font-size:24.71px;letter-spacing:0.000px;color:#f1f5f9;transform:scaleX(0.9729);transform-origin:0 0;-webkit-text-stroke:0.35px #f1f5f9;">New</div>
<svg class="r" style="left:2406px;top:1548px;" width="30" height="26" viewBox="0 0 30 26"><g transform="scale(0.83)"><path d="M4 16 L18 5 L32 16" fill="none" stroke="#f0103c" stroke-width="7" stroke-linecap="round" stroke-linejoin="round"/><path d="M10.5 26.5 L18 20.5 L25.5 26.5" fill="none" stroke="#f0103c" stroke-width="6.5" stroke-linecap="round" stroke-linejoin="round"/></g></svg>
<div class="t" style="left:2456.00px;top:1548.43px;font-size:25.00px;letter-spacing:0.000px;color:#e2e8f0;">2</div>
<div class="r" style="left:2882px;top:1537px;width:135.4000000000001px;height:47.5px;background:#334155;border-radius:8px;border:2px solid #5f6f86;"></div>
<div class="r" style="left:2892px;top:1549px;width:8px;height:24px;background:#4a6490;border-radius:4px;"></div>
<div class="t" style="left:2909.20px;top:1547.62px;font-size:27.62px;letter-spacing:0.000px;color:#f1f5f9;transform:scaleX(0.9891);transform-origin:0 0;">Posture</div>
<div class="r" style="left:132px;top:1624.5px;width:3236px;height:2.0px;background:#232c3d;border-radius:0px;"></div>
<div class="r" style="left:156px;top:1673.5px;width:32px;height:31px;border:2.5px solid #64748b;border-radius:6px;"></div>
<div class="t" style="left:244.50px;top:1675.60px;font-size:26.45px;letter-spacing:0.000px;color:#f1f5f9;transform:scaleX(0.9070);transform-origin:0 0;-webkit-text-stroke:0.45px #f1f5f9;">Feb 24th 2026 10:41:05</div>
<svg class="r" style="left:590px;top:1674px;" width="36" height="30" viewBox="0 0 36 30"><path d="M4 16 L18 5 L32 16" fill="none" stroke="#f0103c" stroke-width="7" stroke-linecap="round" stroke-linejoin="round"/><path d="M10.5 26.5 L18 20.5 L25.5 26.5" fill="none" stroke="#f0103c" stroke-width="6.5" stroke-linecap="round" stroke-linejoin="round"/></svg>
<div class="t" style="left:644.40px;top:1675.60px;font-size:26.45px;letter-spacing:0.000px;color:#e2e8f0;transform:scaleX(0.9293);transform-origin:0 0;">Critical</div>
<div class="r" style="left:802px;top:1669.5px;width:54px;height:39.5px;background:#334155;border-radius:7px;border:2px solid #5f6f86;"></div>
<div class="t" style="left:816.01px;top:1676.46px;font-size:25.44px;letter-spacing:0.000px;color:#e2e8f0;transform:scaleX(0.9200);transform-origin:0 0;">73</div>
<div class="t" style="left:1202.00px;top:1675.60px;font-size:26.45px;letter-spacing:0.000px;color:#f1f5f9;transform:scaleX(0.9069);transform-origin:0 0;-webkit-text-stroke:0.35px #f1f5f9;">&#x27;CVE-2022-37601 in loader-u...</div>
<svg class="r" style="left:1605px;top:1673px;" width="34" height="32" viewBox="0 0 34 32"><rect x="7" y="6" width="20" height="20" rx="3" transform="rotate(45 17 16)" fill="none" stroke="#ececec" stroke-width="3.8"/><rect x="12.5" y="11.5" width="9" height="9" rx="1" transform="rotate(45 17 16)" fill="#ececec"/></svg>
<div class="t" style="left:1651.80px;top:1676.08px;font-size:24.71px;letter-spacing:0.000px;color:#f1f5f9;transform:scaleX(0.9729);transform-origin:0 0;-webkit-text-stroke:0.35px #f1f5f9;">New</div>
<svg class="r" style="left:2406px;top:1676px;" width="30" height="26" viewBox="0 0 30 26"><g transform="scale(0.83)"><path d="M4 16 L18 5 L32 16" fill="none" stroke="#f0103c" stroke-width="7" stroke-linecap="round" stroke-linejoin="round"/><path d="M10.5 26.5 L18 20.5 L25.5 26.5" fill="none" stroke="#f0103c" stroke-width="6.5" stroke-linecap="round" stroke-linejoin="round"/></g></svg>
<div class="t" style="left:2456.00px;top:1676.43px;font-size:25.00px;letter-spacing:0.000px;color:#e2e8f0;">13</div>
<svg class="r" style="left:2511px;top:1676px;" width="30" height="26" viewBox="0 0 30 26"><g transform="scale(0.83)"><path d="M4 16 L18 5 L32 16" fill="none" stroke="#f25f79" stroke-width="7" stroke-linecap="round" stroke-linejoin="round"/><path d="M10.5 26.5 L18 20.5 L25.5 26.5" fill="none" stroke="#f25f79" stroke-width="6.5" stroke-linecap="round" stroke-linejoin="round"/></g></svg>
<div class="t" style="left:2561.00px;top:1676.43px;font-size:25.00px;letter-spacing:0.000px;color:#e2e8f0;">1</div>
<div class="r" style="left:2882px;top:1665px;width:135.4000000000001px;height:47.5px;background:#334155;border-radius:8px;border:2px solid #5f6f86;"></div>
<div class="r" style="left:2892px;top:1677px;width:8px;height:24px;background:#4a6490;border-radius:4px;"></div>
<div class="t" style="left:2909.20px;top:1675.62px;font-size:27.62px;letter-spacing:0.000px;color:#f1f5f9;transform:scaleX(0.9891);transform-origin:0 0;">Posture</div>
<div class="r" style="left:132px;top:1752.5px;width:3236px;height:2.0px;background:#232c3d;border-radius:0px;"></div>
<div class="r" style="left:156px;top:1801.5px;width:32px;height:31px;border:2.5px solid #64748b;border-radius:6px;"></div>
<div class="t" style="left:244.50px;top:1803.60px;font-size:26.45px;letter-spacing:0.000px;color:#f1f5f9;transform:scaleX(0.9041);transform-origin:0 0;-webkit-text-stroke:0.45px #f1f5f9;">Feb 24th 2026 10:41:02</div>
<svg class="r" style="left:590px;top:1802px;" width="36" height="30" viewBox="0 0 36 30"><path d="M4 16 L18 5 L32 16" fill="none" stroke="#f0103c" stroke-width="7" stroke-linecap="round" stroke-linejoin="round"/><path d="M10.5 26.5 L18 20.5 L25.5 26.5" fill="none" stroke="#f0103c" stroke-width="6.5" stroke-linecap="round" stroke-linejoin="round"/></svg>
<div class="t" style="left:644.40px;top:1803.60px;font-size:26.45px;letter-spacing:0.000px;color:#e2e8f0;transform:scaleX(0.9293);transform-origin:0 0;">Critical</div>
<div class="r" style="left:802px;top:1797.5px;width:54px;height:39.5px;background:#334155;border-radius:7px;border:2px solid #5f6f86;"></div>
<div class="t" style="left:816.01px;top:1804.46px;font-size:25.44px;letter-spacing:0.000px;color:#e2e8f0;transform:scaleX(0.9200);transform-origin:0 0;">73</div>
<div class="t" style="left:1202.00px;top:1803.60px;font-size:26.45px;letter-spacing:0.000px;color:#f1f5f9;transform:scaleX(0.9142);transform-origin:0 0;-webkit-text-stroke:0.35px #f1f5f9;">&#x27;CVE-2019-19844 in django, ...</div>
<svg class="r" style="left:1605px;top:1801px;" width="34" height="32" viewBox="0 0 34 32"><rect x="7" y="6" width="20" height="20" rx="3" transform="rotate(45 17 16)" fill="none" stroke="#ececec" stroke-width="3.8"/><rect x="12.5" y="11.5" width="9" height="9" rx="1" transform="rotate(45 17 16)" fill="#ececec"/></svg>
<div class="t" style="left:1651.80px;top:1804.08px;font-size:24.71px;letter-spacing:0.000px;color:#f1f5f9;transform:scaleX(0.9729);transform-origin:0 0;-webkit-text-stroke:0.35px #f1f5f9;">New</div>
<svg class="r" style="left:2406px;top:1804px;" width="30" height="26" viewBox="0 0 30 26"><g transform="scale(0.83)"><path d="M4 16 L18 5 L32 16" fill="none" stroke="#f0103c" stroke-width="7" stroke-linecap="round" stroke-linejoin="round"/><path d="M10.5 26.5 L18 20.5 L25.5 26.5" fill="none" stroke="#f0103c" stroke-width="6.5" stroke-linecap="round" stroke-linejoin="round"/></g></svg>
<div class="t" style="left:2456.00px;top:1804.43px;font-size:25.00px;letter-spacing:0.000px;color:#e2e8f0;">11</div>
<svg class="r" style="left:2511px;top:1804px;" width="30" height="26" viewBox="0 0 30 26"><g transform="scale(0.83)"><path d="M4 16 L18 5 L32 16" fill="none" stroke="#f25f79" stroke-width="7" stroke-linecap="round" stroke-linejoin="round"/><path d="M10.5 26.5 L18 20.5 L25.5 26.5" fill="none" stroke="#f25f79" stroke-width="6.5" stroke-linecap="round" stroke-linejoin="round"/></g></svg>
<div class="t" style="left:2561.00px;top:1804.43px;font-size:25.00px;letter-spacing:0.000px;color:#e2e8f0;">1</div>
<div class="r" style="left:2882px;top:1793px;width:135.4000000000001px;height:47.5px;background:#334155;border-radius:8px;border:2px solid #5f6f86;"></div>
<div class="r" style="left:2892px;top:1805px;width:8px;height:24px;background:#4a6490;border-radius:4px;"></div>
<div class="t" style="left:2909.20px;top:1803.62px;font-size:27.62px;letter-spacing:0.000px;color:#f1f5f9;transform:scaleX(0.9891);transform-origin:0 0;">Posture</div>
<div class="r" style="left:3300px;top:1810px;width:70px;height:70px;border-radius:20px;background:#161616;border:3.8px solid #3cc8a0;"></div>
<svg class="r" style="left:3300px;top:1810px;" width="70" height="70" viewBox="0 0 70 70"><defs><linearGradient id="qg" x1="0" y1="0" x2="0" y2="1"><stop offset="0" stop-color="#46d8aa"/><stop offset="1" stop-color="#2a9f84"/></defs><path d="M29 30.5 Q28.5 22.5 35.5 22.5 Q41.5 22.5 41.5 28.5 Q41.5 32.5 38.5 35 Q36 37.5 36 41.5" fill="none" stroke="url(#qg)" stroke-width="5.8" stroke-linecap="round" stroke-linejoin="round"/><ellipse cx="36" cy="51" rx="3.6" ry="2.8" fill="#2a9f84"/></svg>
</body></html>
